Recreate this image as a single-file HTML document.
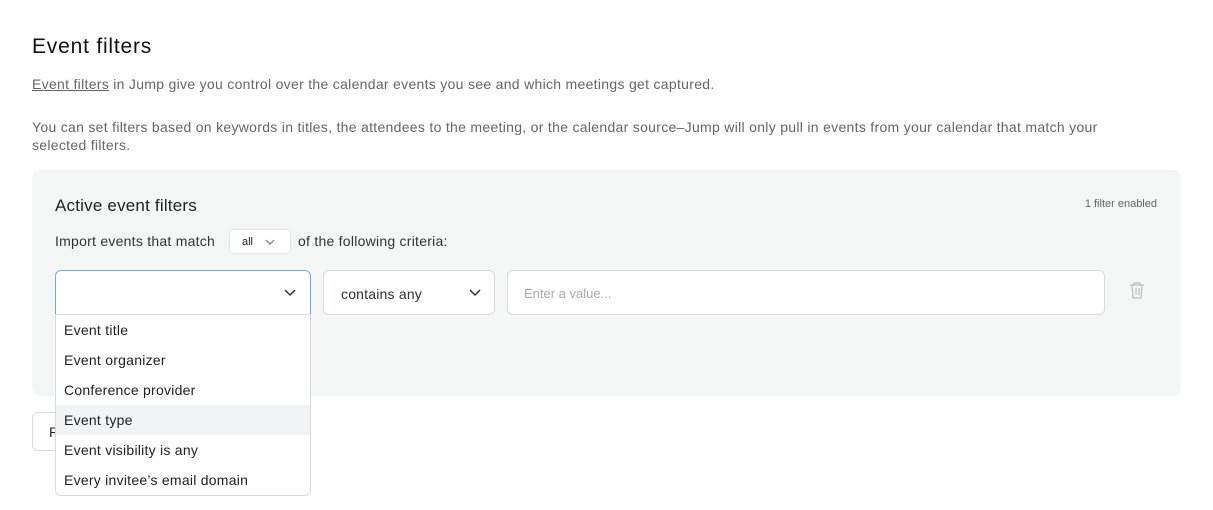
<!DOCTYPE html>
<html><head><meta charset="utf-8"><style>
*{box-sizing:border-box;margin:0;padding:0}
body{width:1213px;height:510px;background:#fff;font-family:"Liberation Sans",sans-serif;color:#222;position:relative;overflow:hidden}
.a{position:absolute;white-space:nowrap}
.p{font-size:14px;color:#666;letter-spacing:0.3px}
.box{position:absolute;background:#fff;border:1px solid #d6dadd;border-radius:6px}
</style></head><body>
<div class="a" style="left:32px;top:35px;font-size:21px;color:#111;letter-spacing:0.8px">Event filters</div>
<div class="a p" style="left:32px;top:76px"><span style="text-decoration:underline">Event filters</span> in Jump give you control over the calendar events you see and which meetings get captured.</div>
<div class="a p" style="left:32px;top:118px;line-height:18px">You can set filters based on keywords in titles, the attendees to the meeting, or the calendar source–Jump will only pull in events from your calendar that match your<br>selected filters.</div>
<div class="a" style="left:32px;top:170px;width:1149px;height:226px;background:#f4f6f6;border-radius:8px"></div>
<div class="a" style="left:55px;top:196px;font-size:17px;color:#222;letter-spacing:0.2px">Active event filters</div>
<div class="a" style="right:56px;top:198px;font-size:11px;color:#666">1 filter enabled</div>
<div class="a" style="left:55px;top:233px;font-size:14px;color:#333;letter-spacing:0.25px">Import events that match</div>
<div class="box" style="left:229px;top:229px;width:62px;height:25px;border-radius:5px;font-size:11px;padding:6px 0 0 12px;border-color:#e2e5e7">all<svg style="position:absolute;left:35px;top:9px" width="10" height="6" viewBox="0 0 10 6"><path d="M1 1l4 4 4-4" fill="none" stroke="#777" stroke-width="1.2"/></svg></div>
<div class="a" style="left:298px;top:233px;font-size:14px;color:#333;letter-spacing:0.25px">of the following criteria:</div>
<div class="box" style="left:55px;top:270px;width:256px;height:45px;border-color:#6aaee0;border-radius:6px 6px 0 0"><svg style="position:absolute;left:228px;top:18px" width="12" height="8" viewBox="0 0 12 8"><path d="M1 1l5 5 5-5" fill="none" stroke="#333" stroke-width="1.5"/></svg></div>
<div class="box" style="left:323px;top:270px;width:172px;height:45px;font-size:14px;padding:15px 0 0 17px;color:#333;letter-spacing:0.2px">contains any<svg style="position:absolute;left:145px;top:18px" width="12" height="8" viewBox="0 0 12 8"><path d="M1 1l5 5 5-5" fill="none" stroke="#333" stroke-width="1.5"/></svg></div>
<div class="box" style="left:507px;top:270px;width:598px;height:45px;font-size:13px;padding:15px 0 0 16px;color:#aaa">Enter a value...</div>
<svg class="a" style="left:1128px;top:280px" width="18" height="20" viewBox="0 0 18 20"><path d="M2 5h14M6 5V3h6v2M4 5l1 13h8l1-13M8 8v7M11 8v7" fill="none" stroke="#b8bdc1" stroke-width="1.2"/></svg>
<div class="box" style="left:32px;top:412px;width:40px;height:39px;font-size:14px;padding:11px 0 0 16px">R</div>
<div class="box" style="left:55px;top:314px;width:256px;height:182px;border-radius:0 0 6px 6px;font-size:14px;color:#222;letter-spacing:0.25px">
<div style="height:30px;padding:7px 0 0 8px">Event title</div>
<div style="height:30px;padding:7px 0 0 8px">Event organizer</div>
<div style="height:30px;padding:7px 0 0 8px">Conference provider</div>
<div style="height:30px;padding:7px 0 0 8px;background:#f1f3f4">Event type</div>
<div style="height:30px;padding:7px 0 0 8px">Event visibility is any</div>
<div style="height:30px;padding:7px 0 0 8px">Every invitee’s email domain</div>
</div>
</body></html>
